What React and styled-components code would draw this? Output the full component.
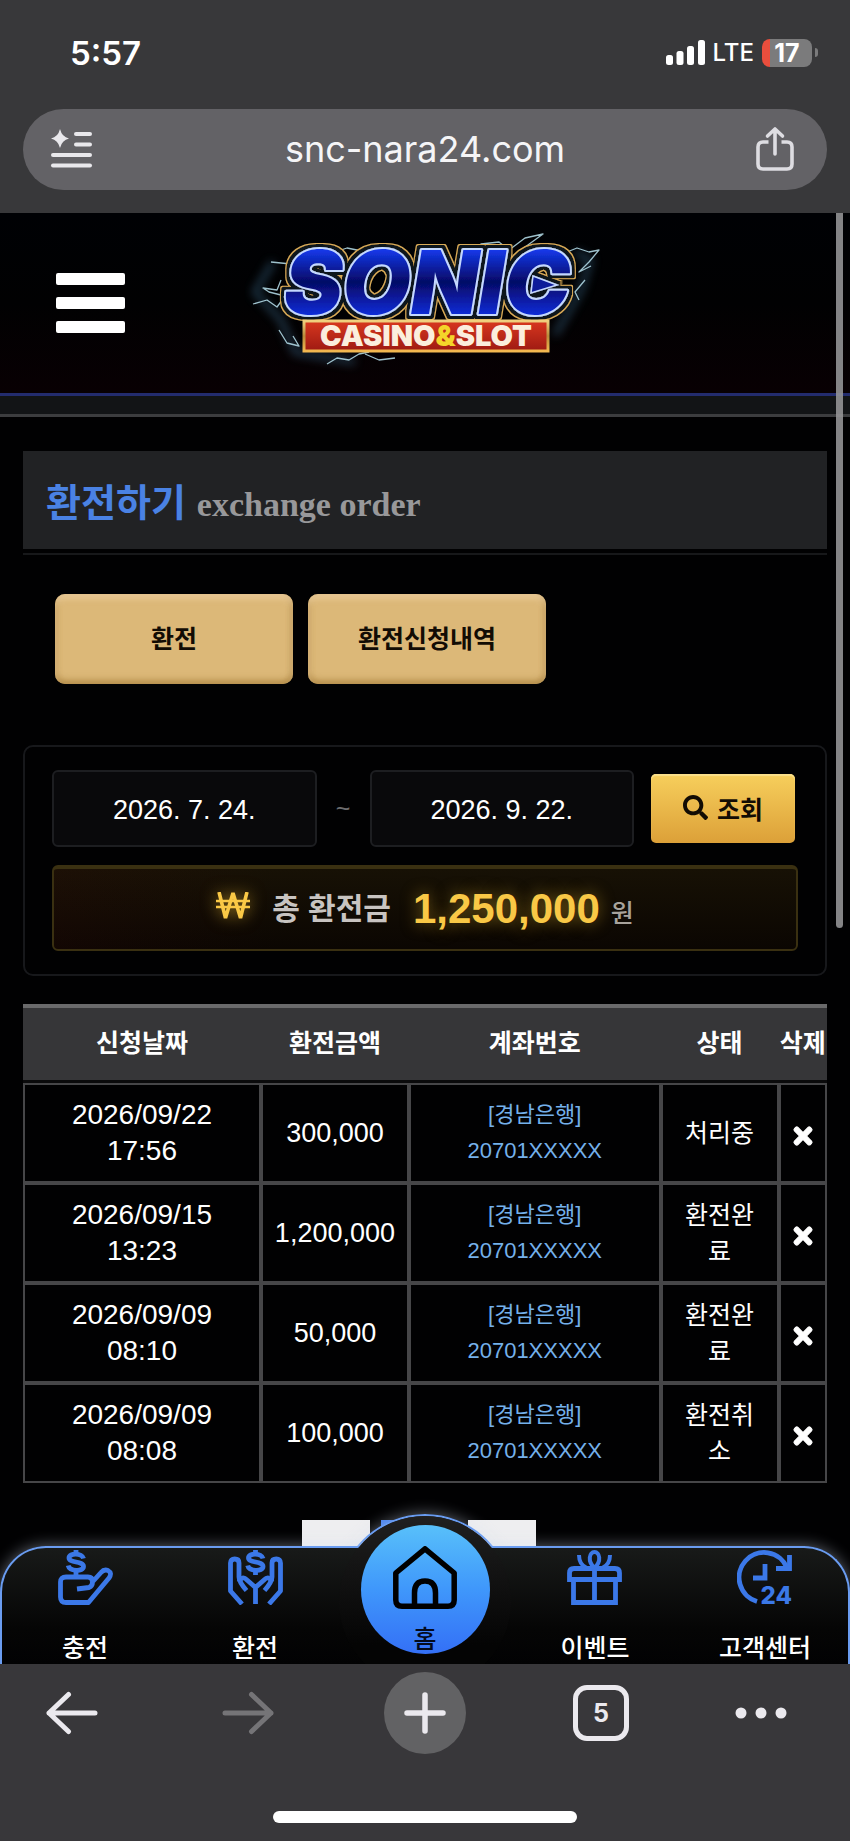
import React from "react";
import styled, { createGlobalStyle } from "styled-components";
import { FaSearch, FaTimes } from "react-icons/fa";

const sans = `"Liberation Sans", "Noto Sans CJK KR", sans-serif`;
const system = `Inter, "Noto Sans CJK KR", sans-serif`;

const GlobalStyle = createGlobalStyle`
  *, *::before, *::after { box-sizing: border-box; }
  body { margin: 0; background: #000; font-family: ${sans}; color: #fff; }
  button, input { font-family: inherit; margin: 0; }
  button { border: 0; padding: 0; background: none; color: inherit; cursor: pointer; }
  a { color: inherit; text-decoration: none; }
  svg { display: block; flex-shrink: 0; }
`;

const Phone = styled.div`
  min-height: 100vh;
  display: flex;
  flex-direction: column;
`;

/* ---------- top browser chrome ---------- */

const TopChrome = styled.header`
  background: #38383a;
  padding: 0 23px 23px;
`;

const StatusBar = styled.div`
  height: 109px;
  padding: 0 9px 4px 47px;
  display: flex;
  align-items: center;
  justify-content: space-between;
  font-family: ${system};
`;

const Clock = styled.time`
  font-size: 33px;
  font-weight: 600;
`;

const StatusRight = styled.div`
  display: flex;
  align-items: center;
  gap: 8px;
  font-size: 24px;
  font-weight: 500;
`;

const Battery = styled.span`
  width: 50px;
  height: 28px;
  border-radius: 8px;
  background: linear-gradient(90deg, #ea4e3d 17%, #7b7b7c 17%);
  display: flex;
  align-items: center;
  justify-content: center;
  font-size: 25px;
  font-weight: 700;
`;

const BatteryGroup = styled.span`
  display: flex;
  align-items: center;
  gap: 3px;
  &::after {
    content: "";
    width: 3px;
    height: 9px;
    border-radius: 0 4px 4px 0;
    background: #7b7b7c;
  }
`;

const AddressBar = styled.div`
  height: 81px;
  border-radius: 41px;
  background: #636266;
  padding: 0 33px 2px 27px;
  display: flex;
  align-items: center;
  justify-content: space-between;
  font-family: ${system};
  font-size: 36px;
  color: #f5f5f7;
`;

/* ---------- site ---------- */

const Site = styled.div`
  position: relative;
  flex: 1;
  overflow: hidden;
  background: #010102;
`;

const ScrollThumb = styled.div`
  position: absolute;
  top: 0;
  right: 7px;
  width: 7px;
  height: 715px;
  border-radius: 0 0 4px 4px;
  background: rgba(150, 150, 152, 0.88);
`;

const SiteHeader = styled.header`
  height: 183px;
  border-bottom: 3px solid #232c6e;
  background: linear-gradient(#000104, #010102 50%, #080003);
  display: grid;
  grid-template-columns: 1fr auto 1fr;
  align-items: center;
  padding: 0 56px;
`;

const MenuButton = styled.button`
  width: 69px;
  display: grid;
  gap: 12px;
`;

const MenuLine = styled.span`
  height: 12px;
  border-radius: 2px;
  background: #fff;
`;

const SubStrip = styled.div`
  height: 21px;
  background: #121416;
  border-bottom: 3px solid #3c3d3f;
`;

const Content = styled.main`
  padding: 34px 23px 76px;
`;

const TitleBox = styled.div`
  background: #212224;
  height: 98px;
  padding: 8px 23px 0;
  display: flex;
  align-items: center;
`;

const TitleRule = styled.div`
  margin-top: 4px;
  height: 2px;
  background: #17181a;
`;

const Title = styled.h1`
  margin: 0;
  display: flex;
  align-items: baseline;
  gap: 11px;
  font-size: 38px;
  line-height: 54px;
  color: #4a82e4;
`;

const TitleSub = styled.small`
  font-family: "Liberation Serif", serif;
  font-size: 34px;
  color: #98989a;
`;

const Tabs = styled.div`
  display: flex;
  gap: 15px;
  padding: 39px 32px 61px;
`;

const TabButton = styled.button`
  width: 238px;
  height: 90px;
  padding-bottom: 4px;
  border-radius: 10px;
  background: #dcb878;
  box-shadow: inset 0 4px 6px rgba(255, 232, 200, 0.5), inset 0 -4px 6px rgba(150, 110, 40, 0.5),
    inset 3px 0 4px rgba(200, 160, 90, 0.4), inset -3px 0 4px rgba(170, 130, 60, 0.4);
  color: #120c04;
  font-size: 25px;
  font-weight: 700;
`;

const Panel = styled.section`
  border: 2px solid #17181b;
  border-radius: 10px;
  padding: 23px 27px;
  height: 231px;
`;

const SearchRow = styled.form`
  display: grid;
  grid-template-columns: 1fr 53px 1fr 161px;
  align-items: center;
  padding-right: 3px;
`;

const DateInput = styled.input`
  width: 100%;
  min-width: 0;
  height: 77px;
  padding: 4px 2px 0;
  border: 2px solid #1d1e21;
  border-radius: 6px;
  background: #09090b;
  color: #fff;
  text-align: center;
  font-size: 27px;
`;

const Tilde = styled.span`
  text-align: center;
  font-size: 25px;
  color: #6c6c6e;
`;

const SearchButton = styled.button`
  height: 69px;
  margin-left: 17px;
  padding-bottom: 2px;
  border-radius: 5px;
  background: linear-gradient(#f7cf5c, #dca038);
  box-shadow: inset 0 2px 1px #fbe08c;
  color: #120c04;
  display: flex;
  align-items: center;
  justify-content: center;
  gap: 9px;
  font-size: 25px;
  font-weight: 700;
`;

const Total = styled.div`
  margin-top: 18px;
  height: 86px;
  border: 2px solid #3a3011;
  border-top: 4px solid #3a3011;
  border-radius: 6px;
  background: linear-gradient(90deg, rgba(60, 10, 10, 0.15), transparent 30%), linear-gradient(#171105, #0b0602);
  display: flex;
  align-items: center;
  justify-content: center;
`;

const TotalLabel = styled.span`
  margin: 0 22px 6px;
  font-size: 30px;
  font-weight: 700;
  color: #c8c4c1;
`;

const TotalValue = styled.strong`
  font-size: 42px;
  color: #f9c846;
  text-shadow: 0 0 16px rgba(240, 190, 50, 0.5);
`;

const TotalUnit = styled.span`
  margin: 4px 0 0 11px;
  font-size: 25px;
  font-weight: 500;
  color: #a8a39c;
`;

const WonIcon = styled.svg`
  margin-bottom: 6px;
  filter: drop-shadow(0 0 8px rgba(240, 190, 50, 0.6));
`;

const Table = styled.table`
  width: 100%;
  margin-top: 28px;
  table-layout: fixed;
  border-collapse: separate;
  border-spacing: 0;
`;

const Col = styled.col`
  width: ${(p) => p.$w};
`;

const Th = styled.th`
  height: 79px;
  padding: 0 0 6px;
  border-top: 4px solid #6a6a6b;
  border-bottom: 3px solid #0a0a0b;
  background: #363638;
  font-size: 25px;
  font-weight: 700;
  white-space: nowrap;
`;

const Td = styled.td`
  height: 100px;
  padding: 0 ${(p) => p.$pad || 0}px;
  border: 2px solid #464648;
  text-align: center;
  font-size: ${(p) => p.$size || 27}px;
  line-height: 36px;
  color: ${(p) => p.$color || "#fff"};
`;

const DeleteButton = styled.button`
  display: grid;
  width: 100%;
  padding-top: 6px;
  place-items: center;
  font-size: 26px;
  & svg {
    stroke: currentColor;
    stroke-width: 24px;
  }
`;

const Pager = styled.nav`
  margin: 37px 12px 0 0;
  display: flex;
  justify-content: center;
  gap: 11px;
`;

const PageLink = styled.a`
  width: ${(p) => (p.$current ? 76 : 68)}px;
  height: 68px;
  background: ${(p) => (p.$current ? "#3f7cec" : "#eeeef0")};
  color: ${(p) => (p.$current ? "#fff" : "#222")};
  display: grid;
  place-items: center;
  font-size: 36px;
`;

/* ---------- site bottom navigation ---------- */

const BottomNav = styled.nav`
  position: absolute;
  left: 0;
  right: 0;
  bottom: 0;
  height: 118px;
  isolation: isolate;
`;

const NavShell = styled.div`
  position: absolute;
  inset: 0;
  border: 2px solid #6a9cf0;
  border-bottom: 0;
  border-radius: 46px 46px 0 0;
  background: linear-gradient(#181a19, #050505 70%, #020203);
  box-shadow: 0 0 16px rgba(215, 225, 240, 0.45);
`;

const NavHump = styled.div`
  position: absolute;
  top: -32px;
  left: 50%;
  width: 176px;
  height: 176px;
  margin-left: -88px;
  border-radius: 50%;
  border: 2px solid ${(p) => (p.$cover ? "transparent" : "#6a9cf0")};
  background: linear-gradient(#202020, #141414 30%, #040404 75%) padding-box;
  box-shadow: ${(p) => (p.$cover ? "none" : "0 0 16px rgba(215, 225, 240, 0.45)")};
`;

const NavItems = styled.ul`
  position: relative;
  margin: 0;
  padding: 0;
  list-style: none;
  height: 100%;
  display: grid;
  grid-template-columns: repeat(5, 1fr);
`;

const NavItem = styled.li`
  display: flex;
  justify-content: center;
`;

const NavLink = styled.a`
  padding-top: 4px;
  display: flex;
  flex-direction: column;
  align-items: center;
  gap: 25px;
  color: #3b78e8;
  font-size: 25px;
`;

const NavLabel = styled.span`
  line-height: 36px;
  font-weight: 500;
  white-space: nowrap;
  color: ${(p) => (p.$dark ? "#030a1e" : "#fff")};
`;

const HomeLink = styled.a`
  width: 129px;
  height: 129px;
  margin-top: -21px;
  padding-top: 21px;
  border-radius: 50%;
  background: linear-gradient(#58c0fa, #3f97fb 50%, #3470f6);
  display: flex;
  flex-direction: column;
  align-items: center;
  gap: 12px;
  color: #000;
  font-size: 25px;
`;

/* ---------- bottom browser chrome ---------- */

const BottomChrome = styled.footer`
  background: #38373a;
  padding: 8px 0 18px;
`;

const Toolbar = styled.div`
  height: 82px;
  padding-right: 32px;
  display: grid;
  grid-template-columns: 144fr 208fr 146fr 206fr 114fr;
  align-items: center;
  justify-items: center;
  color: #ebe9ee;
`;

const ToolButton = styled.button`
  display: grid;
  place-items: center;
  color: ${(p) => (p.disabled ? "#757477" : "#ebe9ee")};
`;

const NewTab = styled(ToolButton)`
  width: 82px;
  height: 82px;
  border-radius: 50%;
  background: #626264;
`;

const TabCount = styled(ToolButton)`
  width: 56px;
  height: 56px;
  border: 5px solid #ebe9ee;
  border-radius: 14px;
  font-family: ${system};
  font-size: 25px;
  font-weight: 700;
`;

const HomeIndicator = styled.div`
  width: 304px;
  height: 12px;
  margin: 57px auto 0;
  border-radius: 6px;
  background: #fff;
`;

/* ---------- drawings ---------- */

const SignalIcon = () => (
  <svg width="39" height="25" viewBox="0 0 39 25" fill="#fff" aria-hidden="true">
    <rect x="0" y="15" width="7" height="10" rx="2.5" />
    <rect x="10.5" y="11" width="7" height="14" rx="2.5" />
    <rect x="21" y="6" width="7" height="19" rx="2.5" />
    <rect x="32" y="0" width="7" height="25" rx="2.5" />
  </svg>
);

const ReaderIcon = () => (
  <svg width="44" height="40" viewBox="0 0 44 40" fill="#e9e8ec" aria-hidden="true">
    <path d="M10 0 Q12 8 19 9.500 Q12 11 10 19 Q8 11 1 9.500 Q8 8 10 0Z" />
    <rect x="24" y="3" width="18" height="4" rx="2" />
    <rect x="24" y="13.500" width="18" height="4" rx="2" />
    <rect x="1" y="24" width="41" height="4" rx="2" />
    <rect x="1" y="34.500" width="41" height="4" rx="2" />
  </svg>
);

const ShareIcon = () => (
  <svg width="38" height="46" viewBox="0 0 38 46" fill="none" stroke="#dedde2" strokeWidth="3.600" strokeLinecap="round" strokeLinejoin="round" aria-hidden="true">
    <path d="M12.500 16H7Q2 16 2 21V38Q2 43 7 43H31Q36 43 36 38V21Q36 16 31 16H25.500" strokeLinecap="butt" />
    <path d="M19 28V3M11.500 10L19 3L26.500 10" />
  </svg>
);

const LogoWord = styled.text`
  font-family: Inter, sans-serif;
  font-weight: 900;
  font-style: italic;
  font-size: 88px;
  text-anchor: middle;
  stroke-linejoin: round;
  paint-order: stroke;
`;

const LogoTagline = styled.text`
  font-family: Inter, sans-serif;
  font-weight: 900;
  font-size: 29px;
  text-anchor: middle;
`;

const LogoIcon = () => (
  <svg width="360" height="170" viewBox="0 -12 360 170" role="img" aria-label="SONIC CASINO&SLOT">
    <defs>
      <linearGradient id="logoBlue" x1="0" y1="0" x2="0" y2="1">
        <stop offset="0.2" stopColor="#1438e8" />
        <stop offset="0.5" stopColor="#050a66" />
        <stop offset="0.85" stopColor="#1030e6" />
      </linearGradient>
      <linearGradient id="logoGold" x1="0" y1="0" x2="0" y2="1">
        <stop offset="0" stopColor="#f1d07e" />
        <stop offset="0.5" stopColor="#b98a3a" />
        <stop offset="1" stopColor="#f3b850" />
      </linearGradient>
      <linearGradient id="logoRed" x1="0" y1="0" x2="0" y2="1">
        <stop offset="0" stopColor="#d8371f" />
        <stop offset="1" stopColor="#9e1a12" />
      </linearGradient>
      <filter id="logoGlow" x="-20%" y="-40%" width="140%" height="180%">
        <feGaussianBlur stdDeviation="5" />
      </filter>
      <filter id="logoOutline" x="-10%" y="-20%" width="120%" height="140%">
        <feMorphology in="SourceAlpha" operator="dilate" radius="4" result="wide" />
        <feFlood floodColor="#d9ab58" />
        <feComposite in2="wide" operator="in" result="gold" />
        <feMorphology in="SourceAlpha" operator="dilate" radius="2.500" result="narrow" />
        <feFlood floodColor="#07131f" />
        <feComposite in2="narrow" operator="in" result="navy" />
        <feMerge>
          <feMergeNode in="gold" />
          <feMergeNode in="navy" />
          <feMergeNode in="SourceGraphic" />
        </feMerge>
      </filter>
    </defs>
    <g fill="none" stroke="#3c7090" strokeWidth="6" opacity="0.5" filter="url(#logoGlow)">
      <path d="M28 32L10 62L36 90L50 122L110 132M330 22L345 30L336 60L310 105" />
    </g>
    <g fill="none" stroke="#b9e2ee" strokeWidth="1.300" strokeLinejoin="round" opacity="0.85">
      <path d="M26 32L46 34M8 74L22 70L32 77L40 66L24 62L18 58L32 60L36 50M34 100L42 113L54 116L48 106M82 134L92 128L104 130L114 124L124 122M120 124L134 130L150 128" />
      <path d="M90 22L102 18L112 20L128 24M220 24L236 14L254 12L264 20L280 8L298 4L276 20M322 22L332 18L344 22L354 20L344 32L334 42L346 36M340 50L330 62L334 70" />
    </g>
    <g filter="url(#logoOutline)">
      <LogoWord x="182" y="84" fill="url(#logoBlue)" stroke="#c4d8ff" strokeWidth="4">SONIC</LogoWord>
      <path d="M288 46L312 55L286 63Z" fill="#0a1a9a" stroke="#c4d8ff" strokeWidth="1.500" />
    </g>
    <rect x="59" y="91" width="244" height="30" fill="url(#logoRed)" stroke="url(#logoGold)" strokeWidth="3" />
    <LogoTagline x="181" y="116" fill="#fbeedd">
      CASINO<tspan fill="#f4d52a">&amp;</tspan>SLOT
    </LogoTagline>
  </svg>
);

const Won = () => (
  <WonIcon width="34" height="28" viewBox="0 0 34 28" fill="none" stroke="#f9c846" strokeWidth="3.600" role="img" aria-label="원화">
    <path d="M3 0L9.500 26L17 1L24.500 26L31 0" strokeLinejoin="bevel" />
    <path d="M0 9H34M0 15H34" strokeWidth="2.400" />
  </WonIcon>
);

const LineIcon = ({ children }) => (
  <svg width="55" height="55" viewBox="0 0 55 55" fill="none" stroke="currentColor" strokeWidth="4.800" strokeLinejoin="round" aria-hidden="true">
    {children}
  </svg>
);

const Dollar = ({ x }) => (
  <g transform={`translate(${x} 0)`}>
    <path d="M7.500 8.500C6.500 3 -7 2.500 -7 8C-7 13 7.500 11 7.500 16.500C7.500 22 -6.500 21.500 -7.800 15.500" />
    <path d="M0 0V5M0 19V25" />
  </g>
);

const DepositIcon = () => (
  <LineIcon>
    <Dollar x={18} />
    <path d="M19 39L31 37.500Q34.500 36 34.500 32Q34.500 27 30 27H8Q2.500 27 2.500 32V47Q2.500 52.500 8 52.500H30.500L51 28Q54.500 23 50 20.500Q46 19 43 22.500L33.500 33" />
  </LineIcon>
);

const WithdrawIcon = () => (
  <LineIcon>
    <Dollar x={27.5} />
    <path d="M14 54L2.500 41V13Q2.500 9 6.700 9Q11 9 11 13V27Q11 32 18.500 40.500" />
    <path d="M41 54L52.500 41V13Q52.500 9 48.300 9Q44 9 44 13V27Q44 32 36.500 40.500" />
    <path d="M11 32Q14 25 19 30L27.500 37.500V54M27.500 37.500L36 30Q41 25 44 32" />
  </LineIcon>
);

const GiftIcon = () => (
  <LineIcon>
    <path d="M2.500 29.500V23Q2.500 18.500 7 18.500H48Q52.500 18.500 52.500 23V29.500Z" strokeLinejoin="miter" />
    <path d="M6.500 31V52.500H48.500V31M27.500 18V52" strokeLinejoin="miter" />
    <path d="M27.500 18C20 11 22.500 2 27.500 2S35 11 27.500 18M12 5Q12 15 20 18M43 5Q43 15 35 18" strokeWidth="4" />
  </LineIcon>
);

const IconNumber = styled.text`
  font-family: Inter, sans-serif;
  font-weight: 800;
  font-size: 24px;
  text-anchor: end;
`;

const SupportIcon = () => (
  <LineIcon>
    <path d="M20 51.500A25 25 0 1 1 50 17.500" />
    <path d="M52.500 5V18.500H39M28 14V28H16" strokeLinejoin="miter" />
    <IconNumber x="55" y="54" fill="currentColor" stroke="none">24</IconNumber>
  </LineIcon>
);

const HomeIcon = () => (
  <svg width="64" height="63" viewBox="0 0 64 63" fill="none" stroke="currentColor" strokeWidth="5.500" strokeLinejoin="round" aria-hidden="true">
    <path d="M32 2.800L61.200 27V54Q61.200 60.200 55 60.200H9Q2.800 60.200 2.800 54V27Z" />
    <path d="M21.500 60V47Q21.500 35 32 35T42.500 47V60" />
  </svg>
);

const ArrowIcon = ({ forward }) => (
  <svg width="52" height="44" viewBox="0 0 52 44" fill="none" stroke="currentColor" strokeWidth="5" strokeLinecap="round" strokeLinejoin="round" aria-hidden="true">
    <path d={forward ? "M3 22H49M29.500 3.500L49 22L29.500 40.500" : "M49 22H3M22.500 3.500L3 22L22.500 40.500"} />
  </svg>
);

const PlusIcon = () => (
  <svg width="42" height="42" viewBox="0 0 42 42" stroke="currentColor" strokeWidth="5.500" strokeLinecap="round" aria-hidden="true">
    <path d="M21 3V39M3 21H39" />
  </svg>
);

const DotsIcon = () => (
  <svg width="52" height="12" viewBox="0 0 52 12" fill="currentColor" aria-hidden="true">
    <circle cx="6" cy="6" r="5.500" />
    <circle cx="26" cy="6" r="5.500" />
    <circle cx="46" cy="6" r="5.500" />
  </svg>
);

/* ---------- data ---------- */

const columns = [
  { name: "신청날짜", width: "29.6%" },
  { name: "환전금액", width: "18.4%" },
  { name: "계좌번호", width: "31.3%" },
  { name: "상태", width: "14.7%" },
  { name: "삭제", width: "6%" },
];

const orders = [
  { date: "2026/09/22 17:56", amount: "300,000", status: "처리중" },
  { date: "2026/09/15 13:23", amount: "1,200,000", status: "환전완료" },
  { date: "2026/09/09 08:10", amount: "50,000", status: "환전완료" },
  { date: "2026/09/09 08:08", amount: "100,000", status: "환전취소" },
];

const NavEntry = ({ icon, label }) => (
  <NavItem>
    <NavLink href="#">
      {icon}
      <NavLabel>{label}</NavLabel>
    </NavLink>
  </NavItem>
);

export default function App() {
  return (
    <Phone>
      <GlobalStyle />
      <TopChrome>
        <StatusBar>
          <Clock>5:57</Clock>
          <StatusRight>
            <SignalIcon />
            <span>LTE</span>
            <BatteryGroup>
              <Battery>17</Battery>
            </BatteryGroup>
          </StatusRight>
        </StatusBar>
        <AddressBar>
          <button aria-label="읽기 도구"><ReaderIcon /></button>
          <span>snc-nara24.com</span>
          <button aria-label="공유"><ShareIcon /></button>
        </AddressBar>
      </TopChrome>

      <Site>
        <SiteHeader>
          <MenuButton aria-label="메뉴">
            <MenuLine />
            <MenuLine />
            <MenuLine />
          </MenuButton>
          <a href="#"><LogoIcon /></a>
        </SiteHeader>
        <SubStrip />
        <Content>
          <TitleBox>
            <Title>
              환전하기 <TitleSub>exchange order</TitleSub>
            </Title>
          </TitleBox>
          <TitleRule />
          <Tabs>
            <TabButton>환전</TabButton>
            <TabButton>환전신청내역</TabButton>
          </Tabs>
          <Panel>
            <SearchRow onSubmit={(e) => e.preventDefault()}>
              <DateInput aria-label="시작일" defaultValue="2026. 7. 24." />
              <Tilde>~</Tilde>
              <DateInput aria-label="종료일" defaultValue="2026. 9. 22." />
              <SearchButton type="submit">
                <FaSearch />
                조회
              </SearchButton>
            </SearchRow>
            <Total>
              <Won />
              <TotalLabel>총 환전금</TotalLabel>
              <TotalValue>1,250,000</TotalValue>
              <TotalUnit>원</TotalUnit>
            </Total>
          </Panel>
          <Table>
            <colgroup>
              {columns.map((c) => (
                <Col key={c.name} $w={c.width} />
              ))}
            </colgroup>
            <thead>
              <tr>
                {columns.map((c) => (
                  <Th key={c.name} scope="col">{c.name}</Th>
                ))}
              </tr>
            </thead>
            <tbody>
              {orders.map((o) => (
                <tr key={o.date}>
                  <Td $size={28} $pad={20}>{o.date}</Td>
                  <Td>{o.amount}</Td>
                  <Td $size={22} $color="#74b0ea">
                    [경남은행]
                    <br />
                    20701XXXXX
                  </Td>
                  <Td $size={25} $pad={16}>{o.status}</Td>
                  <Td>
                    <DeleteButton aria-label="삭제"><FaTimes /></DeleteButton>
                  </Td>
                </tr>
              ))}
            </tbody>
          </Table>
          <Pager aria-label="페이지">
            <PageLink href="#">‹</PageLink>
            <PageLink href="#" $current>1</PageLink>
            <PageLink href="#">›</PageLink>
          </Pager>
        </Content>

        <ScrollThumb />

        <BottomNav>
          <NavHump />
          <NavShell />
          <NavHump $cover />
          <NavItems>
            <NavEntry icon={<DepositIcon />} label="충전" />
            <NavEntry icon={<WithdrawIcon />} label="환전" />
            <NavItem>
              <HomeLink href="#">
                <HomeIcon />
                <NavLabel $dark>홈</NavLabel>
              </HomeLink>
            </NavItem>
            <NavEntry icon={<GiftIcon />} label="이벤트" />
            <NavEntry icon={<SupportIcon />} label="고객센터" />
          </NavItems>
        </BottomNav>
      </Site>

      <BottomChrome>
        <Toolbar>
          <ToolButton aria-label="뒤로"><ArrowIcon /></ToolButton>
          <ToolButton aria-label="앞으로" disabled><ArrowIcon forward /></ToolButton>
          <NewTab aria-label="새 탭"><PlusIcon /></NewTab>
          <TabCount>5</TabCount>
          <ToolButton aria-label="더보기"><DotsIcon /></ToolButton>
        </Toolbar>
        <HomeIndicator />
      </BottomChrome>
    </Phone>
  );
}
